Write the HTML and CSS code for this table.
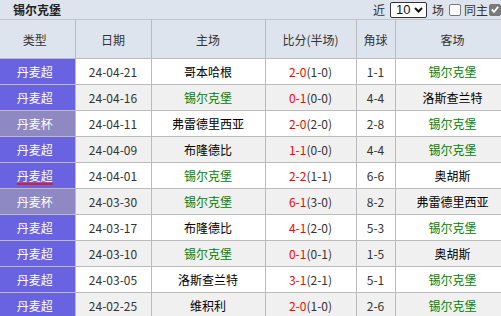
FILE: index.html
```html
<!DOCTYPE html>
<html lang="zh-CN">
<head>
<meta charset="utf-8">
<title>锡尔克堡</title>
<link rel="stylesheet" href="styles.css">
</head>
<body>
<div class="wrap">
  <div class="titlebar">
    <span class="title">锡尔克堡</span>
    <div class="controls">
      <span class="lbl">近</span>
      <span class="select"><span class="sel-val">10</span><svg class="chev" width="9" height="6" viewBox="0 0 9 6"><path d="M1 1 L4.5 4.5 L8 1" fill="none" stroke="#111" stroke-width="2"/></svg></span>
      <span class="lbl">场</span>
      <span class="cb"></span>
      <span class="lbl">同主</span>
      <span class="cb checked"><svg width="11" height="11" viewBox="0 0 11 11"><path d="M2 5.5 L4.5 8 L9 2.5" fill="none" stroke="#fff" stroke-width="2"/></svg></span>
    </div>
  </div>
  <table class="tbl">
    <colgroup>
      <col class="c-type"><col class="c-date"><col class="c-home"><col class="c-score"><col class="c-corner"><col class="c-away">
    </colgroup>
    <thead>
      <tr><th>类型</th><th>日期</th><th>主场</th><th>比分(半场)</th><th>角球</th><th>客场</th></tr>
    </thead>
    <tbody>
      <tr><td class="type">丹麦超</td><td>24-04-21</td><td class="team">哥本哈根</td><td><span class="ft">2-0</span>(1-0)</td><td>1-1</td><td class="team green">锡尔克堡</td></tr>
      <tr class="alt"><td class="type">丹麦超</td><td>24-04-16</td><td class="team green">锡尔克堡</td><td><span class="ft">0-1</span>(0-0)</td><td>4-4</td><td class="team">洛斯查兰特</td></tr>
      <tr><td class="type cup">丹麦杯</td><td>24-04-11</td><td class="team">弗雷德里西亚</td><td><span class="ft">2-0</span>(2-0)</td><td>2-8</td><td class="team green">锡尔克堡</td></tr>
      <tr class="alt"><td class="type">丹麦超</td><td>24-04-09</td><td class="team">布隆德比</td><td><span class="ft">1-1</span>(0-0)</td><td>4-4</td><td class="team green">锡尔克堡</td></tr>
      <tr><td class="type"><span class="uline">丹麦超</span></td><td>24-04-01</td><td class="team green">锡尔克堡</td><td><span class="ft">2-2</span>(1-1)</td><td>6-6</td><td class="team">奥胡斯</td></tr>
      <tr class="alt"><td class="type cup">丹麦杯</td><td>24-03-30</td><td class="team green">锡尔克堡</td><td><span class="ft">6-1</span>(3-0)</td><td>8-2</td><td class="team">弗雷德里西亚</td></tr>
      <tr><td class="type">丹麦超</td><td>24-03-17</td><td class="team">布隆德比</td><td><span class="ft">4-1</span>(2-0)</td><td>5-3</td><td class="team green">锡尔克堡</td></tr>
      <tr class="alt"><td class="type">丹麦超</td><td>24-03-10</td><td class="team green">锡尔克堡</td><td><span class="ft">0-1</span>(0-1)</td><td>1-5</td><td class="team">奥胡斯</td></tr>
      <tr><td class="type">丹麦超</td><td>24-03-05</td><td class="team">洛斯查兰特</td><td><span class="ft">3-1</span>(2-1)</td><td>5-1</td><td class="team green">锡尔克堡</td></tr>
      <tr class="alt"><td class="type">丹麦超</td><td>24-02-25</td><td class="team">维积利</td><td><span class="ft">2-0</span>(1-0)</td><td>2-6</td><td class="team green">锡尔克堡</td></tr>
    </tbody>
  </table>
</div>
</body>
</html>
```
FILE: styles.css
```css
html, body {
  margin: 0;
  padding: 0;
  overflow: hidden;
  background: #fff;
}
body {
  font-family: "Noto Sans CJK SC", "Noto Sans", sans-serif;
  font-size: 12px;
  color: #333;
}
.wrap {
  width: 510px;
}
.titlebar {
  height: 19px;
  background: #dde4ee;
  display: flex;
  align-items: center;
  justify-content: space-between;
}
.title {
  font-weight: bold;
  font-size: 12px;
  color: #222;
  padding-left: 13px;
  line-height: 19px;
}
.controls {
  display: flex;
  align-items: center;
  padding-right: 9px;
  height: 19px;
}
.controls > * { flex-shrink: 0; }
.lbl {
  color: #333;
  line-height: 19px;
}
.select {
  display: flex;
  align-items: center;
  justify-content: space-between;
  box-sizing: border-box;
  width: 37px;
  height: 16px;
  margin: 0 5px;
  padding: 0 3px 0 5px;
  border: 1px solid #333;
  border-radius: 2px;
  background: #fff;
  color: #111;
  font-family: "Liberation Sans", "Noto Sans", sans-serif;
  font-size: 13px;
}
.sel-val { line-height: 14px; }
.chev { display: block; }
.cb {
  box-sizing: border-box;
  width: 12px;
  height: 12px;
  margin: 0 3px 0 5px;
  border: 1px solid #777;
  border-radius: 2px;
  background: #fff;
}
.cb.checked {
  margin: 0 0 0 1px;
  background: #7a7a7a;
  border-color: #7a7a7a;
  display: flex;
  align-items: center;
  justify-content: center;
}
.cb.checked svg { display: block; }
.tbl {
  width: 510px;
  border-collapse: collapse;
  table-layout: fixed;
}
.c-type { width: 75px; }
.c-date { width: 76px; }
.c-home { width: 114px; }
.c-score { width: 91px; }
.c-corner { width: 39px; }
.c-away { width: 115px; }
.tbl th, .tbl td {
  border: 1px solid #bbb;
  padding: 0;
  text-align: center;
  font-weight: normal;
  white-space: nowrap;
}
.tbl th {
  height: 38px;
  background: #dde4ee;
  color: #333;
  border-top-color: #c4c4c4;
}
.tbl td {
  height: 25px;
  background: #fff;
  color: #333;
}
.tbl tr.alt td { background: #f0f0f0; }
.tbl th:first-child, .tbl td:first-child {
  border-left: none;
  padding-right: 5px;
}
.tbl td.type, .tbl tr.alt td.type {
  background: #6a63e1;
  color: #fff;
}
.tbl td.type.cup, .tbl tr.alt td.type.cup {
  background: #8e89c3;
}
.uline {
  text-decoration: underline;
  text-decoration-color: #e0201a;
  text-decoration-thickness: 2px;
  text-underline-offset: 2px;
}
.tbl td.team { color: #000; }
.tbl td.team.green { color: #008000; }
.ft { color: #ff0000; }
```
